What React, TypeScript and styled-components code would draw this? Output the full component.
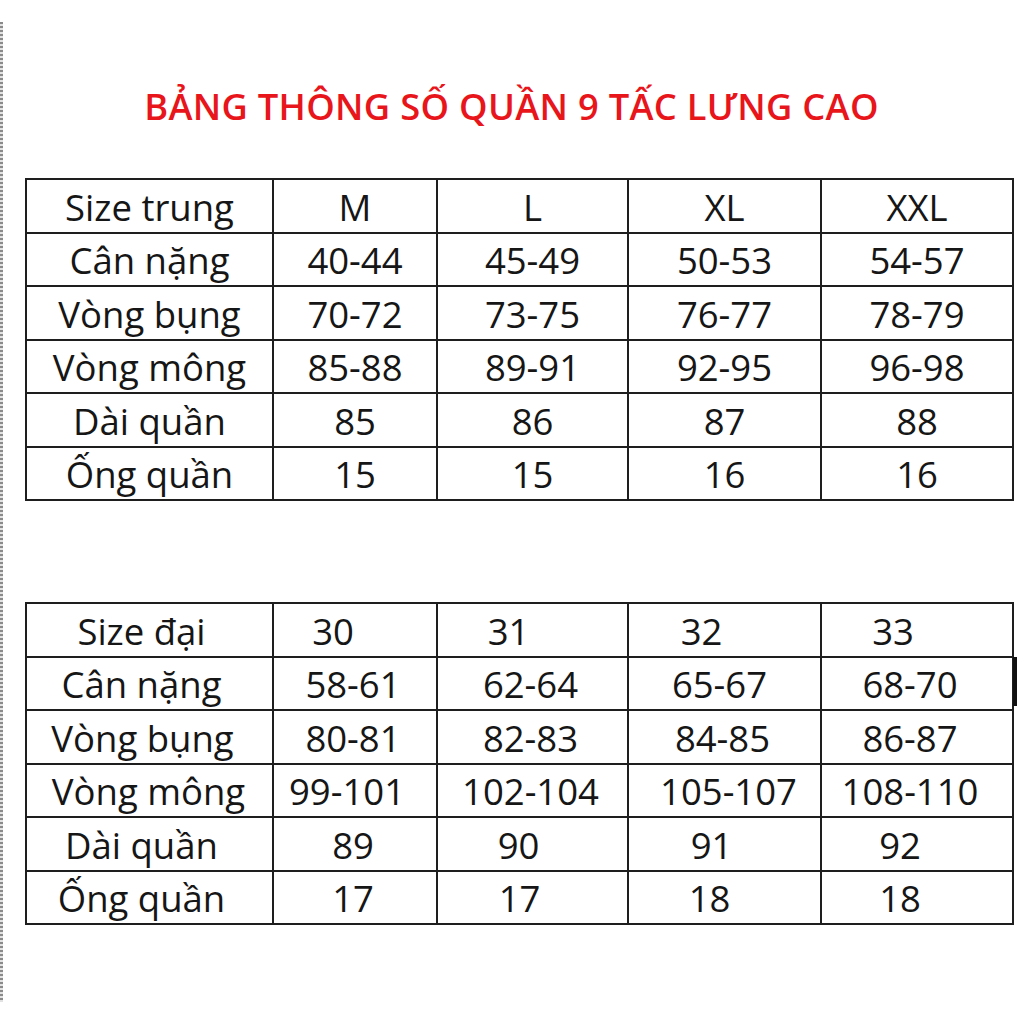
import React from 'react'
import styled, { createGlobalStyle } from 'styled-components'

const GlobalStyle = createGlobalStyle`
  html, body {
    margin: 0;
    padding: 0;
    background: #ffffff;
  }
  body {
    font-family: 'Open Sans', 'Noto Sans', sans-serif;
  }
`

const Page = styled.div`
  display: flex;
  width: 1024px;
  height: 1024px;
  background: #ffffff;
  overflow: hidden;
`

const DottedRule = styled.div`
  flex: none;
  width: 3px;
  height: 980px;
  margin-top: 22px;
  background: repeating-linear-gradient(to bottom, #8a8a8a 0 2px, #e2e2e2 2px 4px);
`

const Content = styled.div`
  position: relative;
  display: flex;
  flex-direction: column;
  padding-left: 22px;
`

const Title = styled.h1`
  margin: 86px 0 0;
  width: 973px;
  padding-right: 14px;
  text-align: center;
  font-size: 36.3px;
  line-height: 40px;
  font-weight: 600;
  color: #e8151b;
  letter-spacing: 0.3px;
`

const Table = styled.table<{ $gap: number }>`
  margin-top: ${({ $gap }) => $gap}px;
  width: 987px;
  table-layout: fixed;
  border-collapse: collapse;
  border: 2px solid #1e1e1e;
`

const Row = styled.tr`
  height: 53.5px;
`

const Cell = styled.td<{ $shift?: number }>`
  border: 2px solid #1e1e1e;
  padding: ${({ $shift = 0 }) =>
    `2px ${$shift < 0 ? -2 * $shift : 0}px 0 ${$shift > 0 ? 2 * $shift : 0}px`};
  text-align: center;
  vertical-align: middle;
  font-size: 36.5px;
  line-height: 40px;
  color: #161616;
  white-space: nowrap;
`

// the stray cursor bar beside the second sheet
const Marker = styled.div`
  position: absolute;
  left: 1010px;
  top: 657px;
  width: 4px;
  height: 49px;
  background: #111111;
`

type Line = { label: string; values: string[]; shifts?: number[] }

const widths = [247, 164, 191, 193, 192]

const trung: Line[] = [
  { label: 'Size trung', values: ['M', 'L', 'XL', 'XXL'] },
  { label: 'Cân nặng', values: ['40-44', '45-49', '50-53', '54-57'] },
  { label: 'Vòng bụng', values: ['70-72', '73-75', '76-77', '78-79'] },
  { label: 'Vòng mông', values: ['85-88', '89-91', '92-95', '96-98'] },
  { label: 'Dài quần', values: ['85', '86', '87', '88'] },
  { label: 'Ống quần', values: ['15', '15', '16', '16'] },
]

const dai: Line[] = [
  { label: 'Size đại', values: ['30', '31', '32', '33'], shifts: [-8, -22, -24, -23, -24] },
  { label: 'Cân nặng', values: ['58-61', '62-64', '65-67', '68-70'], shifts: [-8, -2, -2, -5, -7] },
  { label: 'Vòng bụng', values: ['80-81', '82-83', '84-85', '86-87'], shifts: [-7, -2, -2, -2, -7] },
  { label: 'Vòng mông', values: ['99-101', '102-104', '105-107', '108-110'], shifts: [-1, -8, -2, 4, -7] },
  { label: 'Dài quần', values: ['89', '90', '91', '92'], shifts: [-8, -2, -14, -13, -17] },
  { label: 'Ống quần', values: ['17', '17', '18', '18'], shifts: [-8, -2, -13, -15, -17] },
]

const SizeTable = ({ lines, gap }: { lines: Line[]; gap: number }) => (
  <Table $gap={gap}>
    <colgroup>
      {widths.map((w, i) => (
        <col key={i} style={{ width: w }} />
      ))}
    </colgroup>
    <tbody>
      {lines.map((line) => (
        <Row key={line.label}>
          <Cell $shift={line.shifts?.[0]}>{line.label}</Cell>
          {line.values.map((v, i) => (
            <Cell key={i} $shift={line.shifts?.[i + 1]}>
              {v}
            </Cell>
          ))}
        </Row>
      ))}
    </tbody>
  </Table>
)

const App = () => (
  <>
    <GlobalStyle />
    <Page>
      <DottedRule />
      <Content>
        <Title>BẢNG THÔNG SỐ QUẦN 9 TẤC LƯNG CAO</Title>
        <SizeTable lines={trung} gap={52} />
        <SizeTable lines={dai} gap={101} />
        <Marker />
      </Content>
    </Page>
  </>
)

export default App
